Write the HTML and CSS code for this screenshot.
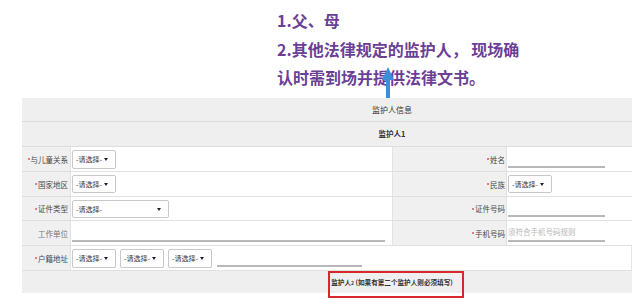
FILE: index.html
```html
<!DOCTYPE html>
<html lang="zh-CN">
<head>
<meta charset="utf-8">
<link rel="stylesheet" href="styles.css">
</head>
<body>
<div class="notes">
  <p class="note first">1.父、母</p>
  <p class="note">2.其他法律规定的监护人， 现场确</p>
  <p class="note">认时需到场并提供法律文书。</p>
  <svg class="arrow" width="12" height="34" viewBox="0 0 12 34"><polygon points="0,13 6,0 12,13" fill="#3a8fd8"/><rect x="4" y="12" width="4" height="22" fill="#3a8fd8"/></svg>
</div>
<div class="form">
  <div class="row-title">监护人信息</div>
  <div class="row-title sub">监护人1</div>
  <div class="row h25">
    <div class="lbl"><i></i>与儿童关系</div>
    <div class="val"><span class="sel w44">-请选择-<b></b></span></div>
    <div class="lbl r"><i></i>姓名</div>
    <div class="val"><span class="line w97"></span></div>
  </div>
  <div class="row h25">
    <div class="lbl"><i></i>国家地区</div>
    <div class="val"><span class="sel w44 s18">-请选择-<b></b></span></div>
    <div class="lbl r"><i></i>民族</div>
    <div class="val"><span class="sel w44 s18">-请选择-<b></b></span></div>
  </div>
  <div class="row h24">
    <div class="lbl"><i></i>证件类型</div>
    <div class="val"><span class="sel w97 s18">-请选择-<b></b></span></div>
    <div class="lbl r"><i></i>证件号码</div>
    <div class="val"><span class="line w97"></span></div>
  </div>
  <div class="row h25">
    <div class="lbl plain">工作单位</div>
    <div class="val"><span class="line w313"></span></div>
    <div class="lbl r"><i></i>手机号码</div>
    <div class="val"><span class="line w97 ph">须符合手机号码规则</span></div>
  </div>
  <div class="row h25">
    <div class="lbl"><i></i>户籍地址</div>
    <div class="val span3">
      <span class="sel w44">-请选择-<b></b></span>
      <span class="sel w44">-请选择-<b></b></span>
      <span class="sel w44">-请选择-<b></b></span>
      <span class="line w145"></span>
    </div>
  </div>
  <div class="row-title foot">监护人<small>2</small> (如果有第二个监护人则必须填写)<span class="mark"></span></div>
</div>
</body>
</html>
```

FILE: styles.css
```css
html, body {
  margin: 0;
  padding: 0;
  background: #ffffff;
}
body {
  width: 640px;
  height: 304px;
  overflow: hidden;
  font-family: "Noto Sans CJK SC", "Noto Sans", sans-serif;
}
.notes {
  position: relative;
  height: 98px;
  box-sizing: border-box;
  padding: 6px 0 0 277px;
}
.note {
  margin: 0;
  font-size: 16px;
  line-height: 28px;
  font-weight: bold;
  color: #6b3f96;
  white-space: nowrap;
}
.note.first {
  margin-bottom: 1px;
}
.arrow {
  position: absolute;
  left: 382px;
  top: 67px;
}
.form {
  margin-left: 22px;
  width: 610px;
  font-size: 7.5px;
  color: #444;
}
.row-title {
  position: relative;
  height: 24px;
  box-sizing: border-box;
  border-bottom: 1px solid #dcdcdc;
  background: #efefef;
  padding-left: 130px;
  text-align: center;
  line-height: 23px;
  font-size: 8px;
  color: #333;
}
.row-title.sub {
  height: 25px;
  line-height: 24px;
  font-weight: bold;
  font-size: 7.5px;
}
.row-title.foot {
  height: 22px;
  line-height: 22px;
  border-bottom: none;
  font-weight: bold;
  font-size: 6.6px;
  color: #333;
}
.row-title.foot small {
  font-size: 5px;
}
.mark {
  position: absolute;
  left: 306px;
  top: 0;
  width: 136px;
  height: 27px;
  box-sizing: border-box;
  border: 2px solid #d8282c;
}
.row {
  display: grid;
  grid-template-columns: 49px 321px 115px 125px;
  box-sizing: border-box;
  border-bottom: 1px solid #e0e0e0;
}
.h25 { height: 25px; }
.h24 { height: 24px; }
.lbl {
  background: #f0f0f0;
  border-right: 1px solid #e2e2e2;
  display: flex;
  align-items: center;
  justify-content: flex-end;
  padding-right: 2px;
  white-space: nowrap;
  color: #4a4a4a;
}
.lbl.r {
  border-left: 1px solid #e2e2e2;
  padding-right: 1px;
}
.lbl.plain {
  color: #777;
}
.lbl i {
  display: inline-block;
  width: 2px;
  height: 2px;
  border-radius: 50%;
  background: #e0506a;
  margin-right: 1px;
}
.val {
  display: flex;
  align-items: center;
  gap: 4px;
  padding-left: 1px;
  background: #fff;
}
.val.span3 {
  grid-column: 2 / 5;
  gap: 4px;
  border-right: 1px solid #e6e6e6;
}
.sel {
  position: relative;
  display: inline-block;
  height: 19px;
  line-height: 17px;
  box-sizing: border-box;
  border: 1px solid #c9c9c9;
  border-radius: 2px;
  padding-left: 3px;
  color: #333;
  background: #fff;
  font-size: 7px;
  white-space: nowrap;
}
.sel.s18 { height: 18px; line-height: 16px; }
.sel b {
  position: absolute;
  right: 7px;
  top: 50%;
  margin-top: -1px;
  width: 0;
  height: 0;
  border-left: 2px solid transparent;
  border-right: 2px solid transparent;
  border-top: 3px solid #222;
}
.w44 { width: 44px; }
.w97 { width: 97px; }
.w313 { width: 313px; }
.w145 { width: 145px; margin-left: 1px; align-self: flex-end; margin-bottom: 2px; }
.line {
  display: inline-block;
  height: 17px;
  box-sizing: border-box;
  border-bottom: 2px solid #b8b8b8;
  align-self: flex-end;
  margin-bottom: 3px;
}
.line.ph {
  line-height: 14px;
  color: #b8b8b8;
  font-size: 7.5px;
  white-space: nowrap;
}
```
